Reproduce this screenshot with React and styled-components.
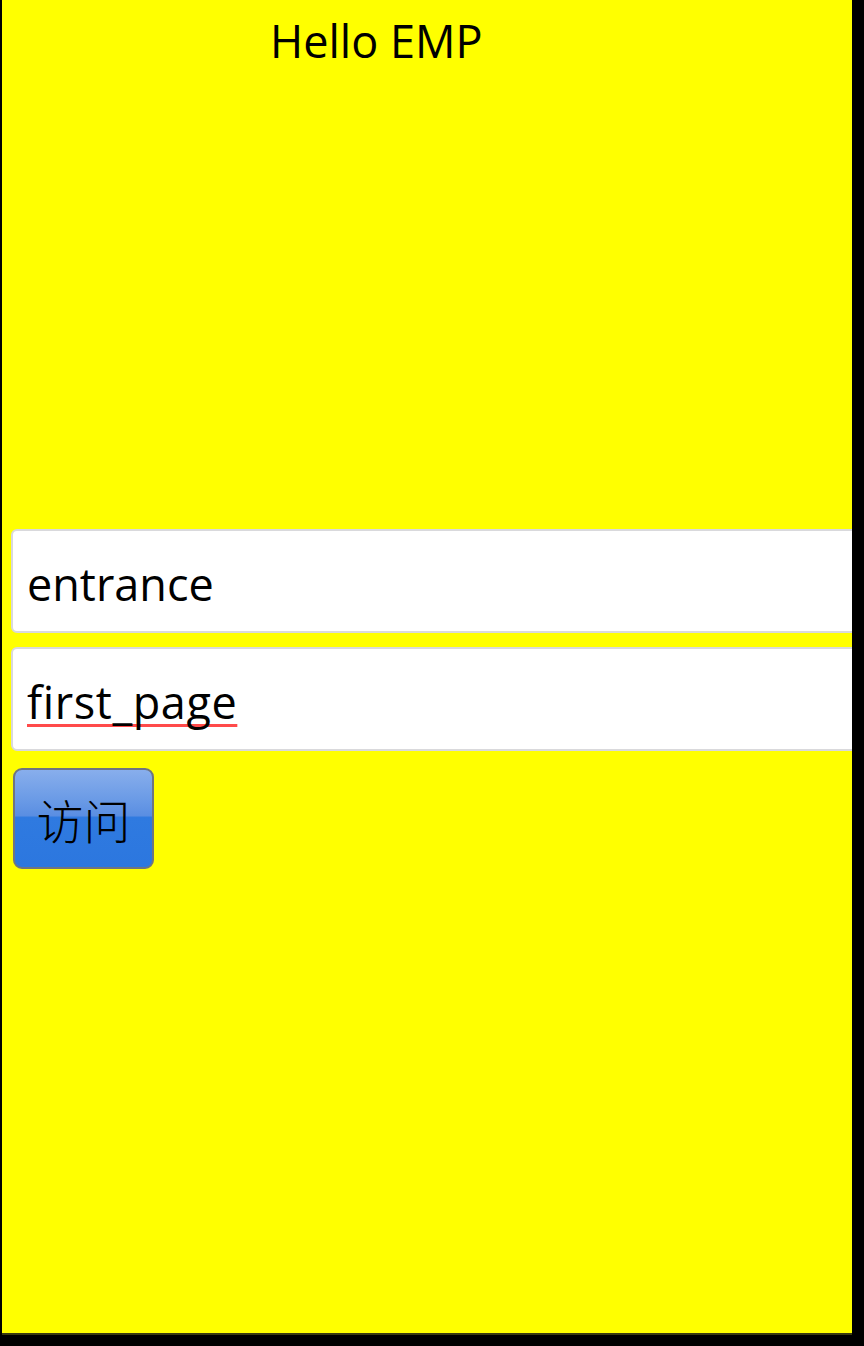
import React from "react";
import styled, { createGlobalStyle } from "styled-components";

const Global = createGlobalStyle`
  html, body {
    margin: 0;
    padding: 0;
    background: #000;
  }
  body {
    width: 864px;
    height: 1346px;
    overflow: hidden;
    font-family: "Open Sans", "Noto Sans CJK SC", sans-serif;
  }
`;

const Screen = styled.div`
  width: 850px;
  height: 1333px;
  margin-left: 2px;
  background: #ffff00;
  overflow: hidden;
  display: flex;
  flex-direction: column;
  box-shadow: 0 2px 0 #3a3a10;
`;

const Title = styled.div`
  padding: 10px 0 0 268px;
  font-size: 45px;
  line-height: 61px;
  color: #000;
  white-space: nowrap;
`;

const Form = styled.div`
  margin-top: 458px;
  padding-left: 9px;
  display: flex;
  flex-direction: column;
  align-items: flex-start;
`;

const Field = styled.div`
  box-sizing: border-box;
  width: 900px;
  height: 104px;
  margin-bottom: ${(p) => p.$gap}px;
  padding: 5px 0 0 14px;
  display: flex;
  align-items: center;
  background: #fff;
  border: 2px solid #d9d9dc;
  border-radius: 6px;
`;

const FieldText = styled.span`
  font-family: "Open Sans", sans-serif;
  font-size: 45px;
  line-height: 61px;
  color: #000;
  white-space: nowrap;
  letter-spacing: ${(p) => (p.$misspelled ? "0.6px" : "0")};
  text-decoration: ${(p) => (p.$misspelled ? "underline" : "none")};
  text-decoration-color: #ff4a4a;
  text-decoration-thickness: 3px;
  text-underline-offset: 5px;
  text-decoration-skip-ink: none;
`;

const Button = styled.button`
  box-sizing: border-box;
  width: 141px;
  height: 101px;
  margin-left: 2px;
  padding: 0;
  border: 2px solid #6f7580;
  border-radius: 9px;
  background: linear-gradient(
    to bottom,
    #88aeec 0%,
    #6b9be6 30%,
    #5a8ee2 47%,
    #2f7ae0 49%,
    #2c77df 100%
  );
  color: #000;
  font-family: "Noto Sans CJK SC", sans-serif;
  font-size: 47px;
  font-weight: 300;
  line-height: 1;
  cursor: pointer;
`;

export default function App() {
  return (
    <>
      <Global />
      <Screen>
        <Title>Hello EMP</Title>
        <Form>
          <Field $gap={14}>
            <FieldText>entrance</FieldText>
          </Field>
          <Field $gap={17}>
            <FieldText $misspelled>first_page</FieldText>
          </Field>
          <Button>访问</Button>
        </Form>
      </Screen>
    </>
  );
}
